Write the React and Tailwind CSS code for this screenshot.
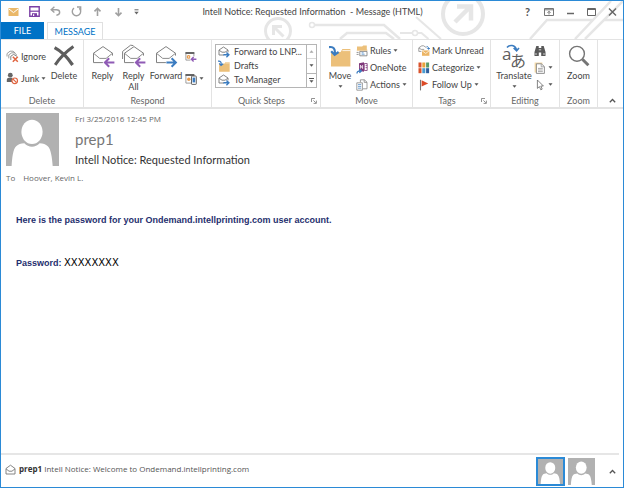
import clsx from 'clsx';

const SANS = "font-['Lato','Open_Sans',sans-serif]";

function Svg({ w, h, className, children }) {
  return (
    <svg width={w} height={h} viewBox={`0 0 ${w} ${h}`} fill="none" className={clsx('shrink-0', className)} aria-hidden="true">
      {children}
    </svg>
  );
}

function Caret({ className }) {
  return (
    <Svg w={5} h={3} className={className}>
      <path d="M0.5 0.3h4L2.5 2.8z" fill="#555" />
    </Svg>
  );
}

/* ---- quick access toolbar ---- */

function MailIcon() {
  return (
    <Svg w={11} h={8}>
      <rect x="0.5" width="10" height="8" rx="0.5" fill="#eab869" />
      <path d="M1 1l4.5 3.6L10 1" stroke="#fff" strokeWidth="1" />
    </Svg>
  );
}

function SaveIcon() {
  return (
    <Svg w={11} h={11}>
      <path d="M0.8 0.8h9.4v9.4H0.8z" stroke="#7b3fa5" strokeWidth="1.4" />
      <path d="M1 5.2h9" stroke="#7b3fa5" strokeWidth="1.2" />
      <path d="M3 7.2h5V10H3z" fill="#7b3fa5" />
      <path d="M4 8.2h1.2V10H4z" fill="#fff" />
    </Svg>
  );
}

function UndoIcon() {
  return (
    <Svg w={11} h={11}>
      <path d="M4.4 0.8L1.2 3.7l3.2 2.8M1.4 3.7h5c4.3 0 4.4 5 0 5.6" stroke="#a0a0a0" strokeWidth="1.4" />
    </Svg>
  );
}

function RedoIcon() {
  return (
    <Svg w={11} h={11}>
      <path d="M8.2 2.3A4.2 4.2 0 1 1 3 2.1" stroke="#a0a0a0" strokeWidth="1.4" />
      <path d="M6 1h3.7v3.4" stroke="#a0a0a0" strokeWidth="1.3" />
    </Svg>
  );
}

function ArrowIcon({ down }) {
  return (
    <Svg w={11} h={10} className={down && 'rotate-180'}>
      <path d="M5.5 9V1.4M2.5 4.4l3-3.1 3 3.1" stroke="#a0a0a0" strokeWidth="1.6" />
    </Svg>
  );
}

/* ---- ribbon, small icons ---- */

function IgnoreIcon() {
  return (
    <Svg w={13} h={13}>
      <path d="M1 6.5V3.6l3-2.4h3l2.4 2" stroke="#888" strokeWidth="0.8" />
      <path d="M2.8 8.4V4.8l3-2h2.4l2.6 2.1" stroke="#888" strokeWidth="0.8" />
      <path d="M4.8 10V6.2L7.6 4.4 11 6.3" stroke="#777" strokeWidth="0.9" />
      <path d="M6.8 6.8l5 5M11.8 6.8l-5 5" stroke="#e0643f" strokeWidth="1.5" />
    </Svg>
  );
}

function JunkIcon() {
  return (
    <Svg w={13} h={13}>
      <circle cx="4.3" cy="3.2" r="2.4" fill="#666" />
      <path d="M0.8 10V7.8c0-1.3 1-2 2-2h3.6v4.2z" fill="#666" />
      <circle cx="8.7" cy="8.8" r="2.8" fill="#fff" stroke="#e0643f" strokeWidth="1.2" />
      <path d="M6.8 7l3.8 3.7" stroke="#e0643f" strokeWidth="1.1" />
    </Svg>
  );
}

function MeetingIcon() {
  return (
    <Svg w={12} h={12}>
      <path d="M0.9 1.5h8v7.6h-8z" fill="#fff" stroke="#888" strokeWidth="0.8" />
      <path d="M0.5 1h8.8v2H0.5z" fill="#666" />
      <circle cx="3.6" cy="5.9" r="1.3" stroke="#e89b4c" strokeWidth="1.2" />
      <path d="M5.4 5.4H12v5.4H5.4z" fill="#fff" />
      <path d="M11.4 8.2H6.6M8.6 6L6.4 8.2l2.2 2.2" stroke="#8f5bb5" strokeWidth="1.4" />
    </Svg>
  );
}

function MoreRespondIcon() {
  return (
    <Svg w={12} h={12}>
      <path d="M0.9 1.5h8v8.6h-8z" fill="#fff" stroke="#888" strokeWidth="0.8" />
      <path d="M0.5 1h8.8v2H0.5z" fill="#666" />
      <circle cx="3.8" cy="6.3" r="1.7" fill="#e89b4c" />
      <rect x="6.5" y="3" width="4.8" height="8.4" rx="0.6" fill="#fff" stroke="#555" strokeWidth="0.9" />
      <path d="M7.6 4.6h2.6v4.8H7.6z" fill="#3b7cc0" />
    </Svg>
  );
}

function EnvelopeForwardIcon() {
  return (
    <Svg w={12} h={12}>
      <path d="M1 9V4l4.5-3L10 4v2.4M1 9h5M1.2 4.3L4 6.2h3L9.8 4.3" stroke="#777" strokeWidth="0.9" />
      <path d="M5.4 8.8h5.2M8.4 6.4l2.5 2.4-2.5 2.4" stroke="#3b7cc0" strokeWidth="1.4" />
    </Svg>
  );
}

function FolderMoveIcon({ size = 12 }) {
  return (
    <svg width={size} height={size} viewBox="0 0 22 22" fill="none" className="shrink-0" aria-hidden="true">
      <path d="M2 7h9.6l1.8-3h8v17.4H2z" fill="#ecc07a" />
      <path d="M13.4 5.6h8" stroke="#fff" strokeWidth="0.8" />
      <path d="M0 2.4C4.6 1.2 6.6 4 6 9" stroke="#fff" strokeWidth="4" />
      <path d="M0 2.2C4.6 1.2 6.4 4 5.8 9M2.2 6.2l3.4 3.6 4-2.8" stroke="#3b7cc0" strokeWidth="2.2" />
    </svg>
  );
}

function RulesIcon() {
  return (
    <Svg w={12} h={12}>
      <path d="M1 1.6h5.2l1-1.2h3.6V5H1z" fill="#ecc07a" />
      <path d="M0.8 5.2h10.6" stroke="#ecc07a" strokeWidth="1" />
      <path d="M3.8 6.4h7.2v4.4H3.8z" fill="#fff" stroke="#777" strokeWidth="0.8" />
      <path d="M5.6 7.8h2M5.6 9.2h3" stroke="#3b7cc0" strokeWidth="0.7" />
      <path d="M0.6 7.4h2M0.6 9.4h2" stroke="#777" strokeWidth="0.8" />
    </Svg>
  );
}

function OneNoteIcon() {
  return (
    <Svg w={12} h={12}>
      <path d="M3 1.2L8 0.3v9.4L3 8.8z" fill="#80397b" />
      <path d="M8.3 1.5h2.9v7H8.3z" fill="#fff" stroke="#80397b" strokeWidth="0.8" />
      <path d="M9.6 3.4h1.6M9.6 5.6h1.6" stroke="#80397b" strokeWidth="0.8" />
      <path d="M4.4 6.6V3.2l2.2 3.3V3.1" stroke="#fff" strokeWidth="0.8" />
      <path d="M1 11.5c0-2 1-2.7 3.6-2.6M3.4 7.2L5.3 9l-1.9 1.8" stroke="#3b7cc0" strokeWidth="1.3" />
    </Svg>
  );
}

function ActionsIcon() {
  return (
    <Svg w={12} h={12}>
      <path d="M4.4 3.4V0.8h4l2.6 2.4v6.6H6.8M8.2 0.8v2.6H11" stroke="#888" strokeWidth="0.8" />
      <path d="M0.8 3.8h5.6v7.4H0.8z" fill="#fff" stroke="#888" strokeWidth="0.8" />
      <path d="M2 5.6h3.2M2 7.4h3.2M2 9.2h3.2" stroke="#3b7cc0" strokeWidth="0.7" />
    </Svg>
  );
}

function MarkUnreadIcon() {
  return (
    <Svg w={12} h={12}>
      <path d="M0.8 6.4V2.8L3.8 0.8h1.8L8.6 2.8M0.8 6.4h2.6M1 3l2.2 1.4h3" stroke="#888" strokeWidth="0.8" />
      <path d="M4 5.4h7.4v5.4H4z" fill="#ecb565" />
      <path d="M4.2 5.8l3.5 2.6 3.5-2.6" stroke="#fff" strokeWidth="0.7" />
      <path d="M8.6 1.4c1.6.2 2.1 1 2 2.6M9.4 3l1.2 1.4L11.8 3" stroke="#3b7cc0" strokeWidth="1" />
    </Svg>
  );
}

function CategorizeIcon() {
  const colors = ['#d9532c', '#e9a23b', '#5b9a68', '#d9532c', '#4a9bd0', '#2f5f9e'];
  return (
    <Svg w={12} h={12}>
      {colors.map((c, i) => (
        <rect key={i} x={0.5 + (i % 3) * 3.8} y={0.5 + Math.floor(i / 3) * 5.7} width="3" height="5" fill={c} />
      ))}
    </Svg>
  );
}

function FlagIcon() {
  return (
    <Svg w={12} h={12}>
      <path d="M2.5 0.8v10.6" stroke="#777" strokeWidth="1.1" />
      <path d="M3.6 1.2l6.6 3.4-6.6 3z" fill="#dc4a26" />
    </Svg>
  );
}

function BinocularsIcon() {
  return (
    <Svg w={12} h={12}>
      <path d="M2.3 1h2.4v2h2.6V1h2.4l1.8 6v4H7.2V7.4H4.8V11H0.5V7z" fill="#595959" />
      <path d="M4.8 4.8h2.4M2 8v2M10 8v2" stroke="#fff" strokeWidth="0.7" />
    </Svg>
  );
}

function PagesIcon() {
  return (
    <Svg w={12} h={12}>
      <path d="M0.6 0.5h7.8v10H0.6z" fill="#f3d9a8" />
      <path d="M2.4 1.8h5l3 2.8v6.8h-8z" fill="#fff" stroke="#777" strokeWidth="0.8" />
      <path d="M7.2 2v2.8h3M4 6.4h4.8M4 8h4.8M4 9.6h4.8" stroke="#888" strokeWidth="0.7" />
    </Svg>
  );
}

function PointerIcon() {
  return (
    <Svg w={12} h={12}>
      <path d="M3.4 1v8.4l2-1.8 1.4 3.2 1.4-.7L6.8 7h2.6z" fill="#fff" stroke="#666" strokeWidth="0.8" />
    </Svg>
  );
}

/* ---- ribbon, large icons ---- */

function DeleteIcon() {
  return (
    <Svg w={22} h={22}>
      <path d="M1.6 2.6C8 6 15 13 19.6 20" stroke="#5e5e5e" strokeWidth="3.2" />
      <path d="M20.4 1.6C13.6 6.4 7.2 12.6 2.2 19.8" stroke="#5e5e5e" strokeWidth="3" />
    </Svg>
  );
}

function EnvelopeIcon({ double, forward }) {
  return (
    <Svg w={24} h={24}>
      {double && <path d="M0.6 15V7.4l8-6.2 2.8.4" stroke="#808080" strokeWidth="1" />}
      <path d="M2.5 18.6V9.2L12 2.6l9.5 6.6v2.4M2.5 18.6h9.4" stroke="#808080" strokeWidth="1" />
      <path d="M2.7 9.4l6 5h6.4l6.2-5" stroke="#808080" strokeWidth="0.9" />
      {forward ? (
        <path d="M12.4 18.5h9.2M17.6 14.2l4.3 4.3-4.3 4.3" stroke="#3b7cc0" strokeWidth="2" />
      ) : (
        <path d="M23.4 18.5h-9.2M18.2 14.2l-4.3 4.3 4.3 4.3" stroke="#8f5bb5" strokeWidth="2" />
      )}
    </Svg>
  );
}

function TranslateIcon() {
  return (
    <span className="relative block h-6 w-6 shrink-0 text-[#5e5e5e]">
      <span className="absolute top-0 left-0 font-['Open_Sans',sans-serif] text-[17px] leading-5">a</span>
      <span className="absolute top-2 left-2 font-['Noto_Sans_CJK_JP',sans-serif] text-[16px] leading-4">あ</span>
      <svg width="14" height="9" viewBox="0 0 14 9" fill="none" className="absolute top-0 left-1" aria-hidden="true">
        <path d="M1 3.6C3.6.6 9 .4 10.6 6M7.6 4l3 2.8L13 4" stroke="#3b7cc0" strokeWidth="1.6" />
      </svg>
    </span>
  );
}

function ZoomIcon() {
  return (
    <Svg w={22} h={22}>
      <circle cx="9" cy="8.8" r="7.4" stroke="#757575" strokeWidth="1.4" />
      <path d="M14.4 14.2l6 6" stroke="#757575" strokeWidth="3" />
    </Svg>
  );
}

/* ---- controls ---- */

function LargeButton({ icon, label, caret, className }) {
  return (
    <button type="button" className={clsx('flex shrink-0 flex-col items-center pt-1', className)}>
      <span className="flex h-6 items-center">{icon}</span>
      <span className="mt-[2px] text-center leading-[11px]">{label}</span>
      {caret && <Caret className="mt-1" />}
    </button>
  );
}

function SmallButton({ icon, label, caret }) {
  return (
    <button type="button" className="flex h-[17px] items-center gap-[2px] whitespace-nowrap" aria-label={label ? undefined : 'More'}>
      {icon}
      {label && <span>{label}</span>}
      {caret && <Caret />}
    </button>
  );
}

function Group({ label, launcher, className, children }) {
  return (
    <section className={clsx('flex shrink-0 flex-col border-r border-[#e3e3e3]', className)}>
      <div className="flex h-[55px] px-[3px]">{children}</div>
      <div className="flex h-3 items-center text-[#666]">
        <span className="flex-1 text-center">{label}</span>
        {launcher && (
          <Svg w={6} h={6} className="mr-[3px]">
            <path d="M0.5 4V0.5H4M2.4 2.4l2.4 2.4M5.4 2.6v2.8H2.6" stroke="#777" strokeWidth="0.8" />
          </Svg>
        )}
      </div>
    </section>
  );
}

function Avatar({ className }) {
  return (
    <svg viewBox="0 0 52 52" className={clsx('shrink-0 bg-[#b1b1b1]', className)} aria-hidden="true">
      <ellipse cx="25.5" cy="18.5" rx="10.4" ry="12" fill="#fff" />
      <path d="M5.5 52c.6-9 1.4-16.5 4.5-19.5 2-1.8 4.5-2.6 8-2.8 4 4.4 11 4.4 15 0 3.5.2 6 1 8 2.8 3.1 3 4.1 10.5 4.8 19.5z" fill="#fff" />
    </svg>
  );
}

const steps = [
  { label: 'Forward to LNP...', icon: <EnvelopeForwardIcon /> },
  { label: 'Drafts', icon: <FolderMoveIcon /> },
  { label: 'To Manager', icon: <EnvelopeForwardIcon /> },
];

function TitleBar() {
  return (
    <header className="relative h-[38px] overflow-hidden">
      <svg width="364" height="38" viewBox="260 1 364 38" fill="none" className="absolute top-0 right-0" stroke="#e6e6e6" aria-hidden="true">
        <circle cx="279" cy="31" r="12.5" strokeWidth="3" />
        <path d="M284.500 36.5L275 27M274.500 35v-8.5h8.5" strokeWidth="3" />
        <circle cx="313" cy="25" r="2.5" strokeWidth="1.5" />
        <path d="M315.500 25H385l16 14M341 39l7-6h39l8 6" strokeWidth="2.5" />
        <circle cx="416" cy="33" r="2.5" strokeWidth="1.5" />
        <path d="M401 33h12M418.500 33h4l7 6M417 17l25 22" strokeWidth="2" />
        <circle cx="464" cy="14" r="20" strokeWidth="4" />
        <path d="M456 22l15-15M458 6.500h14v14" strokeWidth="4.500" />
        <path d="M531 39l17-19h46M605 20h19M576 39l36-38M586 39l38-38" strokeWidth="2.500" />
      </svg>

      <div className="relative flex h-[21px] items-center">
        <div className="flex flex-1 items-center gap-[10px] pl-[7px]">
          <MailIcon />
          <button type="button" aria-label="Save"><SaveIcon /></button>
          <button type="button" aria-label="Undo"><UndoIcon /></button>
          <button type="button" aria-label="Redo"><RedoIcon /></button>
          <button type="button" aria-label="Previous item"><ArrowIcon /></button>
          <button type="button" aria-label="Next item"><ArrowIcon down /></button>
          <button type="button" aria-label="Customize toolbar">
            <Svg w={5} h={6}>
              <path d="M0.5 0.8h4" stroke="#666" />
              <path d="M0.3 2.8h4.4L2.5 5.5z" fill="#666" />
            </Svg>
          </button>
        </div>
        <h1 className="whitespace-pre text-[#444]">Intell Notice: Requested Information  - Message (HTML)</h1>
        <div className="flex flex-1 items-center justify-end gap-3 pr-[6px] text-[#555]">
          <button type="button" className="w-[9px] text-[11px] font-bold">?</button>
          <button type="button" aria-label="Ribbon options">
            <Svg w={10} h={8}>
              <path d="M0.5 0.5h9v7h-9zM0.5 1.8h9M5 6.5v-3M3.5 4.8L5 3.3l1.5 1.5" stroke="#666" strokeWidth="0.9" />
            </Svg>
          </button>
          <button type="button" aria-label="Minimize">
            <Svg w={9} h={8}>
              <path d="M1 5.5h7" stroke="#666" strokeWidth="1.5" />
            </Svg>
          </button>
          <button type="button" aria-label="Maximize">
            <Svg w={9} h={8}>
              <path d="M0.5 0.5h8v7h-8zM0.5 1.5h8" stroke="#666" />
            </Svg>
          </button>
          <button type="button" aria-label="Close">
            <Svg w={9} h={8}>
              <path d="M1 0.5l7 7M8 0.5l-7 7" stroke="#666" strokeWidth="1.4" />
            </Svg>
          </button>
        </div>
      </div>

      <nav className="relative flex h-[18px] gap-[3px]">
        <button type="button" className="w-[43px] bg-[#0072c6] text-white">FILE</button>
        <button type="button" className="w-14 border border-b-0 border-[#e0e0e0] bg-white text-[#0072c6]">MESSAGE</button>
      </nav>
    </header>
  );
}

function Ribbon() {
  return (
    <div className="flex border-t border-b-2 border-[#e3e3e3] bg-white text-[#444]">
      <Group label="Delete" className="w-[83px]">
        <div className="ml-[2px] flex w-[43px] flex-col gap-[5px] pt-2">
          <SmallButton icon={<IgnoreIcon />} label="Ignore" />
          <SmallButton icon={<JunkIcon />} label="Junk" caret />
        </div>
        <LargeButton icon={<DeleteIcon />} label="Delete" className="w-8" />
      </Group>

      <Group label="Respond" className="w-32">
        <LargeButton icon={<EnvelopeIcon />} label="Reply" className="w-[31px]" />
        <LargeButton icon={<EnvelopeIcon double />} label={<>Reply<br />All</>} className="w-[31px]" />
        <LargeButton icon={<EnvelopeIcon forward />} label="Forward" className="w-[34px]" />
        <div className="ml-[2px] flex flex-col items-start gap-[5px] pt-2">
          <SmallButton icon={<MeetingIcon />} />
          <SmallButton icon={<MoreRespondIcon />} caret />
        </div>
      </Group>

      <Group label="Quick Steps" launcher className="w-[109px]">
        <div className="mt-1 flex h-11 flex-1 border border-[#b5b5b5]">
          <div className="flex-1">
            {steps.map((s) => (
              <button key={s.label} type="button" className="flex h-[14px] w-full items-center gap-1 pl-[2px] whitespace-nowrap">
                {s.icon}
                <span>{s.label}</span>
              </button>
            ))}
          </div>
          <div className="flex w-[10px] flex-col divide-y divide-[#b5b5b5] border-l border-[#b5b5b5]">
            <button type="button" aria-label="Scroll up" className="flex flex-1 items-center justify-center opacity-50"><Caret className="rotate-180" /></button>
            <button type="button" aria-label="Scroll down" className="flex flex-1 items-center justify-center"><Caret /></button>
            <button type="button" aria-label="More steps" className="flex flex-1 flex-col items-center justify-center gap-[1px]">
              <span className="h-px w-[5px] bg-[#555]" />
              <Caret />
            </button>
          </div>
        </div>
      </Group>

      <Group label="Move" className="w-[92px]">
        <LargeButton icon={<FolderMoveIcon size={22} />} label="Move" caret className="w-8" />
        <div className="flex flex-col pt-[2px]">
          <SmallButton icon={<RulesIcon />} label="Rules" caret />
          <SmallButton icon={<OneNoteIcon />} label="OneNote" />
          <SmallButton icon={<ActionsIcon />} label="Actions" caret />
        </div>
      </Group>

      <Group label="Tags" launcher className="w-[78px]">
        <div className="ml-[2px] flex flex-col pt-[2px]">
          <SmallButton icon={<MarkUnreadIcon />} label="Mark Unread" />
          <SmallButton icon={<CategorizeIcon />} label="Categorize" caret />
          <SmallButton icon={<FlagIcon />} label="Follow Up" caret />
        </div>
      </Group>

      <Group label="Editing" className="w-[69px]">
        <LargeButton icon={<TranslateIcon />} label="Translate" caret className="w-10" />
        <div className="flex flex-col pt-[2px]">
          <SmallButton icon={<BinocularsIcon />} />
          <SmallButton icon={<PagesIcon />} caret />
          <SmallButton icon={<PointerIcon />} caret />
        </div>
      </Group>

      <Group label="Zoom" className="w-[38px]">
        <LargeButton icon={<ZoomIcon />} label="Zoom" className="flex-1" />
      </Group>

      <button type="button" aria-label="Collapse ribbon" className="flex flex-1 items-end justify-end pr-[7px] pb-1">
        <Svg w={7} h={5}>
          <path d="M0.8 4.2l2.700-2.7 2.7 2.7" stroke="#555" strokeWidth="1.3" />
        </Svg>
      </button>
    </div>
  );
}

export default function App() {
  return (
    <div className={clsx(SANS, 'flex h-screen flex-col border border-[#2b8ad6] bg-white text-[9px] leading-3')}>
      <TitleBar />
      <Ribbon />

      <main className="flex-1">
        <div className="flex gap-4 pt-1 pl-[5px]">
          <Avatar className="size-[53px]" />
          <div className="text-[#666]">
            <p className="font-['Open_Sans',sans-serif] text-[8px]">Fri 3/25/2016 12:45 PM</p>
            <p className="mt-1 text-[15px] leading-5 text-[#777]">prep1</p>
            <h2 className="mt-[3px] text-[11px] leading-4 text-[#333]">Intell Notice: Requested Information</h2>
          </div>
        </div>
        <p className="mt-1 flex gap-2 pl-[5px] font-['Open_Sans',sans-serif] text-[8px] text-[#666]">
          <span>To</span>
          <span>Hoover, Kevin L.</span>
        </p>

        <div className="mt-[30px] pl-[15px] font-['Liberation_Sans',Arial,sans-serif] font-bold text-[#1f2f6e]">
          <p>Here is the password for your Ondemand.intellprinting.com user account.</p>
          <p className="mt-[31px]">
            Password: <span className="font-['DejaVu_Sans',sans-serif] text-[10px] font-normal text-black">XXXXXXXX</span>
          </p>
        </div>
      </main>

      <footer className="mr-1 flex h-[34px] items-center border-t-2 border-[#e6e6e6] text-[#555]">
        <div className="flex flex-1 items-center gap-[3px] pb-1 pl-1">
          <Svg w={11} h={11}>
            <path d="M1 4.5l4.5-3.3L10 4.5V10H1zM1 4.8l3 2.4h3l3-2.4" stroke="#777" strokeWidth="0.9" />
          </Svg>
          <p className="font-['Open_Sans',sans-serif] text-[8px]">
            <b className="text-[#333]">prep1</b> Intell Notice: Welcome to Ondemand.intellprinting.com
          </p>
        </div>
        <button type="button" aria-label="prep1" className="border-2 border-[#2b8ad6]"><Avatar className="size-[25px]" /></button>
        <button type="button" aria-label="Hoover, Kevin L." className="ml-[3px]"><Avatar className="size-[27px]" /></button>
        <button type="button" aria-label="Expand people pane" className="mr-[3px] ml-[14px]">
          <Svg w={7} h={5}>
            <path d="M0.8 4.2l2.700-2.7 2.7 2.7" stroke="#555" strokeWidth="1.3" />
          </Svg>
        </button>
      </footer>
    </div>
  );
}
